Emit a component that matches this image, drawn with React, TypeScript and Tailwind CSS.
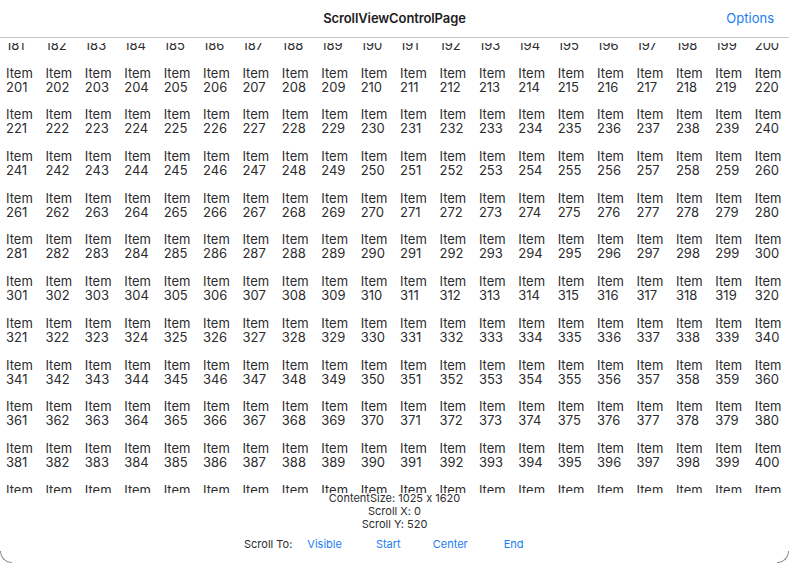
import React from "react";

const COLS = 20;
const FIRST_ROW = 9; // row holding items 181-200
const ROW_COUNT = 12;

const rows = Array.from({ length: ROW_COUNT }, (_, r) =>
	Array.from({ length: COLS }, (_, c) => (FIRST_ROW + r) * COLS + c + 1),
);

const App = () => {
	return (
		<div
			className="relative w-[789px] h-[563px] bg-white overflow-hidden text-[#1c1c1e]"
			style={{ fontFamily: "Inter, 'Liberation Sans', sans-serif" }}>
			{/* header */}
			<div className="relative h-[38px] border-b border-[#c4c4c6] flex items-center justify-center">
				<span className="text-[13px] font-semibold tracking-[-0.1px]">ScrollViewControlPage</span>
				<span className="absolute right-[15px] top-[9px] text-[13px] text-[#1a7cf5]">Options</span>
			</div>

			{/* scroll view */}
			<div className="mt-[5px] h-[450px] overflow-hidden">
				<div className="mt-[-19px] pl-[6px]">
					{rows.map((row, i) => (
						<div key={i} className="flex h-[41.7px]">
							{row.map((n) => (
								<div key={n} className="w-[39.42px] shrink-0 text-[13px] leading-[14px] text-[#2c2c2e]">
									<div>Item</div>
									<div>{n}</div>
								</div>
							))}
						</div>
					))}
				</div>
			</div>

			{/* info */}
			<div className="flex flex-col items-center text-[11px] leading-[13px] text-[#2c2c2e] -mt-[1px] [font-feature-settings:'calt'_0]">
				<span>ContentSize: 1025 x 1620</span>
				<span>Scroll X: 0</span>
				<span>Scroll Y: 520</span>
			</div>
			<div className="flex items-center text-[11px] mt-[5px] pl-[244px]">
				<span className="text-[#2c2c2e]">Scroll To:</span>
				<span className="ml-[15px] text-[#1a7cf5]">Visible</span>
				<span className="ml-[34px] text-[#1a7cf5]">Start</span>
				<span className="ml-[32px] text-[#1a7cf5]">Center</span>
				<span className="ml-[36px] text-[#1a7cf5]">End</span>
			</div>

			{/* window corners */}
			<div className="absolute bottom-0 left-0 w-[12px] h-[12px] border-l border-b border-[#8e8e93] rounded-bl-[12px]" />
			<div className="absolute bottom-0 right-0 w-[12px] h-[12px] border-r border-b border-[#8e8e93] rounded-br-[12px]" />
		</div>
	);
};

export default App;
